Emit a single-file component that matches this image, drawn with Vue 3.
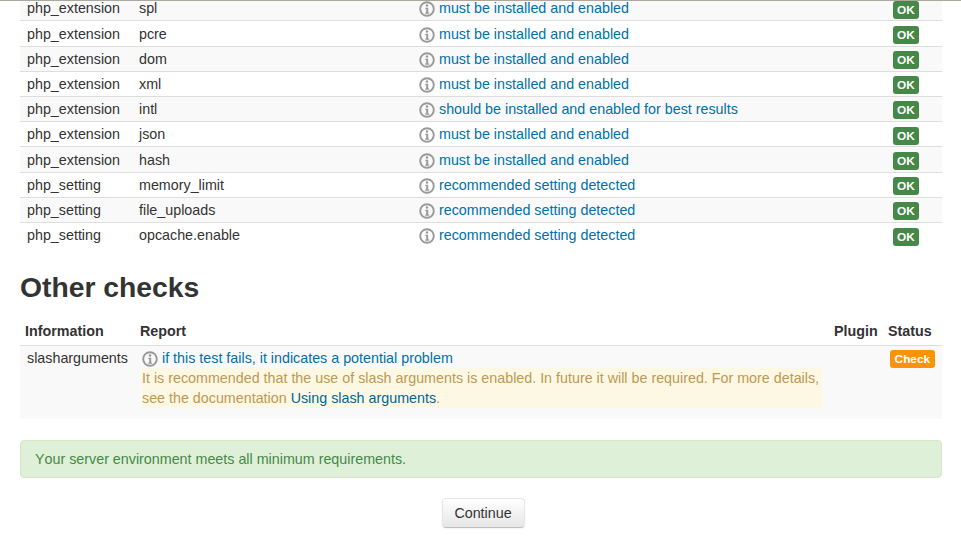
<template>
  <div class="page">
    <table class="checks first">
      <colgroup>
        <col style="width: 112px" />
        <col style="width: 280px" />
        <col style="width: 474px" />
        <col />
      </colgroup>
      <tbody>
        <tr v-for="row in rows" :key="row.name">
          <td>{{ row.type }}</td>
          <td>{{ row.name }}</td>
          <td>
            <svg class="info-icon" width="16" height="16" viewBox="0 0 16 16">
              <circle cx="8" cy="8" r="6.8" fill="none" stroke="#999" stroke-width="1.9" />
              <circle cx="8" cy="4.5" r="1.25" fill="#999" />
              <path d="M6.3 6.7h2.9v4.8h1v1.2H6.2v-1.2h1V7.9h-.9z" fill="#999" />
            </svg>
            <a href="#">{{ row.report }}</a>
          </td>
          <td><span class="badge ok">OK</span></td>
        </tr>
      </tbody>
    </table>

    <h3>Other checks</h3>

    <table class="checks other">
      <colgroup>
        <col style="width: 115px" />
        <col style="width: 694px" />
        <col style="width: 54px" />
        <col />
      </colgroup>
      <thead>
        <tr>
          <th>Information</th>
          <th>Report</th>
          <th>Plugin</th>
          <th>Status</th>
        </tr>
      </thead>
      <tbody>
        <tr>
          <td>slasharguments</td>
          <td>
            <svg class="info-icon" width="16" height="16" viewBox="0 0 16 16">
              <circle cx="8" cy="8" r="6.8" fill="none" stroke="#999" stroke-width="1.9" />
              <circle cx="8" cy="4.5" r="1.25" fill="#999" />
              <path d="M6.3 6.7h2.9v4.8h1v1.2H6.2v-1.2h1V7.9h-.9z" fill="#999" />
            </svg>
            <a href="#">if this test fails, it indicates a potential problem</a>
            <div class="warn">
              It is recommended that the use of slash arguments is enabled. In future it will be required. For more details, see the documentation
              <a href="#">Using slash arguments</a>.
            </div>
          </td>
          <td></td>
          <td><span class="badge check">Check</span></td>
        </tr>
      </tbody>
    </table>

    <div class="alert">Your server environment meets all minimum requirements.</div>

    <div class="actions">
      <button type="button">Continue</button>
    </div>
  </div>
</template>

<script setup>
const mustBe = 'must be installed and enabled'
const detected = 'recommended setting detected'

const rows = [
  { type: 'php_extension', name: 'spl', report: mustBe },
  { type: 'php_extension', name: 'pcre', report: mustBe },
  { type: 'php_extension', name: 'dom', report: mustBe },
  { type: 'php_extension', name: 'xml', report: mustBe },
  { type: 'php_extension', name: 'intl', report: 'should be installed and enabled for best results' },
  { type: 'php_extension', name: 'json', report: mustBe },
  { type: 'php_extension', name: 'hash', report: mustBe },
  { type: 'php_setting', name: 'memory_limit', report: detected },
  { type: 'php_setting', name: 'file_uploads', report: detected },
  { type: 'php_setting', name: 'opcache.enable', report: detected }
]
</script>

<style>
html,
body {
  margin: 0;
  background: #fff;
}
</style>

<style scoped>
.page {
  height: 539px;
  overflow: hidden;
  box-sizing: border-box;
  padding: 0 19px 0 20px;
  border-top: 1px solid #aaa8a0;
  font-family: "Liberation Sans", Arial, sans-serif;
  font-size: 14.3px;
  font-kerning: none;
  line-height: 20px;
  color: #333;
}

.checks {
  width: 922px;
  table-layout: fixed;
  border-collapse: collapse;
}

.first {
  margin-top: -5.8px;
}

.checks td {
  padding: 0.4px 0 0 7px;
  height: 25.2px;
  box-sizing: border-box;
  border-top: 1px solid #ddd;
  vertical-align: middle;
  white-space: nowrap;
}

.first tbody tr:nth-child(odd) td {
  background: #f9f9f9;
}

.info-icon {
  margin-right: 4px;
  vertical-align: -4px;
}

a {
  color: #0070a8;
  text-decoration: none;
}

.badge {
  display: inline-block;
  border-radius: 3px;
  font-size: 11.84px;
  font-weight: bold;
  line-height: 14px;
  padding: 2px 4px;
  color: #fff;
  vertical-align: middle;
}

.ok {
  background: #468847;
}

.check {
  padding: 2px 4.6px;
  background: #f89406;
}

h3 {
  margin: 0;
  padding-top: 19px;
  font-size: 28.3px;
  line-height: 40px;
  font-weight: bold;
  color: #333;
}

.other {
  margin-top: 10px;
}

.other th {
  padding: 4px 0 4px 5px;
  text-align: left;
  font-weight: bold;
  white-space: nowrap;
}

.other td {
  background: #f9f9f9;
  vertical-align: top;
  height: 74px;
  padding-top: 2px;
}

.other td:nth-child(2) {
  white-space: normal;
}

.warn {
  background: #fcf8e3;
  color: #c09853;
  width: 680px;
}

.warn a {
  color: #00669a;
}

.alert {
  margin-top: 21px;
  width: 922px;
  height: 38px;
  box-sizing: border-box;
  padding: 8px 14px;
  border: 1px solid #d6e9c6;
  border-radius: 4px;
  background: #dff0d8;
  color: #468847;
}

.actions {
  margin-top: 20px;
  display: flex;
  justify-content: center;
}

button {
  width: 83px;
  height: 30px;
  margin-left: 4px;
  padding: 0;
  border: 1px solid #ccc;
  border-color: #e6e6e6 #e6e6e6 #bfbfbf;
  border-radius: 4px;
  background: linear-gradient(to bottom, #fff, #e6e6e6);
  box-shadow: inset 0 1px 0 rgba(255, 255, 255, 0.2), 0 1px 2px rgba(0, 0, 0, 0.05);
  font: inherit;
  color: #333;
}
</style>
